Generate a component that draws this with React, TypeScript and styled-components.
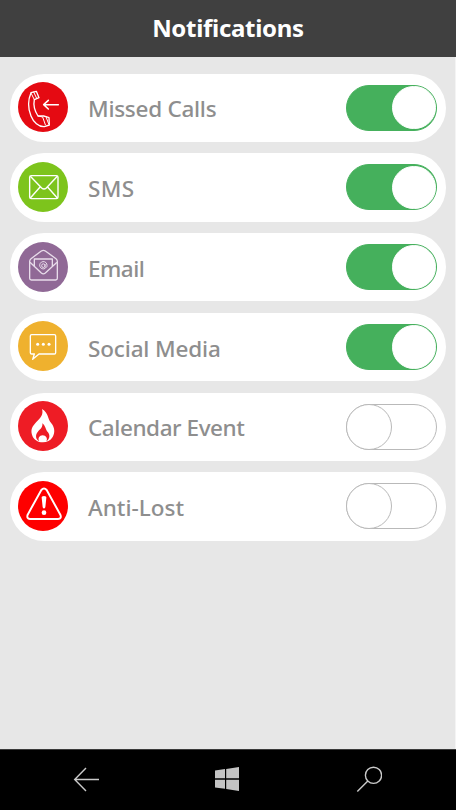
import React, { useState } from "react";
import styled, { createGlobalStyle } from "styled-components";

interface IToggleProps {
  $on: boolean;
}

interface IBadgeProps {
  $color: string;
}

interface ILabelProps {
  $spacing: number;
}

interface ISetting {
  name: string;
  color: string;
  spacing: number;
  enabled: boolean;
  icon: React.ReactNode;
}

const GlobalStyle = createGlobalStyle`
  * {
    box-sizing: border-box;
  }

  body {
    margin: 0;
    font-family: "Noto Sans", "Open Sans", sans-serif;
  }
`;

const Screen = styled.div`
  display: flex;
  flex-direction: column;
  width: 456px;
  height: 810px;
  overflow: hidden;
  background-color: #e7e7e7;
`;

const Header = styled.header`
  display: flex;
  flex: none;
  align-items: center;
  justify-content: center;
  height: 57px;
  background-color: #404040;
`;

const Title = styled.h1`
  margin: 0;
  padding-bottom: 3px;
  color: #fff;
  font-size: 24px;
  line-height: 33px;
  font-weight: 700;
  letter-spacing: -0.3px;
`;

const Settings = styled.main`
  display: flex;
  flex: 1;
  flex-direction: column;
  gap: 11.5px;
  padding: 16.5px 9px 0 10px;
  border-right: 1px solid #f4f4f4;
`;

const Row = styled.section`
  display: flex;
  flex: none;
  align-items: center;
  height: 68.25px;
  padding: 0 9px 0 8px;
  border-radius: 34.2px;
  background-color: #fff;
`;

const Badge = styled.div<IBadgeProps>`
  flex: none;
  width: 50px;
  height: 50px;
  margin-bottom: 1px;
  border-radius: 50%;
  background-color: ${({ $color }) => $color};

  svg {
    display: block;
    width: 100%;
    height: 100%;
  }
`;

const Label = styled.span<ILabelProps>`
  flex: 1;
  margin-left: 20px;
  padding-top: 3.5px;
  color: #8e8e8e;
  font-size: 22.5px;
  line-height: 30px;
  font-weight: 500;
  letter-spacing: ${({ $spacing }) => $spacing}px;
  white-space: nowrap;
`;

const Toggle = styled.button<IToggleProps>`
  display: flex;
  flex: none;
  align-items: center;
  justify-content: ${({ $on }) => ($on ? "flex-end" : "flex-start")};
  width: 91px;
  height: 46px;
  margin: 0;
  padding: 0;
  border: 1px solid ${({ $on }) => ($on ? "#45b05c" : "#b9b9b9")};
  border-radius: 23px;
  background-color: ${({ $on }) => ($on ? "#45b05c" : "#fff")};
`;

const Knob = styled.span<IToggleProps>`
  flex: none;
  width: ${({ $on }) => ($on ? 43.5 : 46)}px;
  height: ${({ $on }) => ($on ? 43.5 : 46)}px;
  margin: ${({ $on }) => ($on ? "0.25px" : "-1px")};
  border: 1px solid ${({ $on }) => ($on ? "#fff" : "#b9b9b9")};
  border-radius: 50%;
  background-color: #fff;
`;

const NavBar = styled.nav`
  display: flex;
  flex: none;
  align-items: center;
  justify-content: space-between;
  height: 61px;
  padding: 0 74px 2px 72px;
  border-top: 1px solid #3a3a3a;
  background-color: #000;

  svg {
    display: block;
  }
`;

const PhoneIcon = () => (
  <svg viewBox="24 24 150 150" fill="none" stroke="#fff" strokeWidth="4" strokeLinejoin="round" strokeLinecap="round">
    <path d="M63 56 L79 52 L87 71 L73 77 C70 92 74 111 84 126 L101 126 L108 128 L117 131 L118 153 L103 158 C86 159 70 144 63 126 C54 104 54 77 63 56Z" />
    <path d="M71 54 L80 73 M63 57 L73 77 M84 126 L98 129 L106 152 M108 128 L116 150" strokeWidth="3" />
    <path d="M145 92 H102 M115 79 L101 92 L115 105" strokeWidth="4.6" />
  </svg>
);

const EnvelopeIcon = () => (
  <svg viewBox="24 24 150 150" fill="none" stroke="#fff" strokeWidth="4.2" strokeLinejoin="round">
    <rect x="59" y="65" width="85" height="69" rx="5" />
    <path d="M61 67 L95 102 Q102 108 109 102 L142 67 M61 132 L91 98 M142 132 L112 98" />
  </svg>
);

const OpenEnvelopeIcon = () => (
  <svg viewBox="24 24 150 150" fill="none" stroke="#e8dcea" strokeWidth="4" strokeLinejoin="round">
    <path d="M59 82 Q59 77 63 74 L94 51 Q100 47 106 51 L138 74 Q142 77 142 82 V133 Q142 138 137 138 H64 Q59 138 59 133Z" />
    <path d="M60 85 L94 117 Q100 122 106 117 L141 85 M73 96 V75 H127 V96" />
    <path d="M106 103 A11 11 0 1 1 111 95 C111 102 105 102 105 98 V90 M105 95 A5 5.5 0 1 1 95 95 A5 5.5 0 1 1 105 95" strokeWidth="3" />
  </svg>
);

const ChatIcon = () => (
  <svg viewBox="24 24 150 150" fill="none" stroke="#fff" strokeWidth="4" strokeLinejoin="round">
    <path d="M65 65 H133 Q137 65 137 69 V119 Q137 123 133 123 H87 L68 139 L73 123 H65 Q61 123 61 119 V69 Q61 65 65 65Z" />
    <g fill="#fff" stroke="none">
      <circle cx="83" cy="94" r="4.5" />
      <circle cx="100" cy="94" r="4.5" />
      <circle cx="117" cy="94" r="4.5" />
    </g>
  </svg>
);

const FlameIcon = () => (
  <svg viewBox="24 24 150 150">
    <path
      d="M96 48 C116 59 112 77 124 91 C134 103 136 119 128 132 C121 143 111 148 99 148 C83 148 70 139 66 125 C61 109 68 99 79 87 C92 74 101 65 96 48Z"
      fill="#fff"
    />
    <path
      d="M97 91 C107 98 106 110 114 118 C121 127 119 139 109 145 C114 137 108 127 98 127 C88 127 82 137 88 145 C77 140 75 126 83 117 C91 108 99 103 97 91Z"
      fill="#ee1c25"
    />
  </svg>
);

const WarningIcon = () => (
  <svg viewBox="24 24 150 150" fill="none" stroke="#fff" strokeWidth="5.8" strokeLinejoin="round">
    <path d="M94 51 Q102 42 110 51 L151 125 Q156 137 144 138 H60 Q49 137 53 125Z" />
    <path d="M95 74 Q94 69 102 69 Q110 69 109 74 L106 103 Q102 110 98 103Z" fill="#fff" stroke="none" />
    <circle cx="102" cy="119" r="7" fill="#fff" stroke="none" />
  </svg>
);

const BackIcon = () => (
  <svg width="28" height="26" viewBox="0 0 28 26" fill="none" stroke="#cacaca" strokeWidth="1.4">
    <path d="M27 13.5 H3 M14 2 L2.7 13.5 L14 25" />
  </svg>
);

const WindowsIcon = () => (
  <svg width="24" height="24" viewBox="0 0 24 24" fill="#c4c4c4">
    <path d="M0 3.6 L10 2.1 V11.3 H0Z M11.2 1.9 L24 0 V11.3 H11.2Z M0 12.7 H10 V21.8 L0 20.4Z M11.2 12.7 H24 V24 L11.2 22Z" />
  </svg>
);

const SearchIcon = () => (
  <svg width="28" height="26" viewBox="-3 0 28 26" fill="none" stroke="#cacaca" strokeWidth="1.4">
    <circle cx="16.5" cy="9.3" r="8.1" />
    <path d="M10.8 15 L0.3 25.5" />
  </svg>
);

const settings: ISetting[] = [
  { name: "Missed Calls", color: "#e50a12", spacing: -0.27, enabled: true, icon: <PhoneIcon /> },
  { name: "SMS", color: "#7dc41c", spacing: 0.4, enabled: true, icon: <EnvelopeIcon /> },
  { name: "Email", color: "#906996", spacing: -0.5, enabled: true, icon: <OpenEnvelopeIcon /> },
  { name: "Social Media", color: "#efb12e", spacing: -0.15, enabled: true, icon: <ChatIcon /> },
  { name: "Calendar Event", color: "#ee1c25", spacing: -0.43, enabled: false, icon: <FlameIcon /> },
  { name: "Anti-Lost", color: "#fe0000", spacing: 0, enabled: false, icon: <WarningIcon /> },
];

const SettingRow = ({ name, color, spacing, enabled, icon }: ISetting) => {
  const [on, setOn] = useState(enabled);

  return (
    <Row>
      <Badge $color={color}>{icon}</Badge>
      <Label $spacing={spacing}>{name}</Label>
      <Toggle $on={on} role="switch" aria-checked={on} onClick={() => setOn(!on)}>
        <Knob $on={on} />
      </Toggle>
    </Row>
  );
};

const App = () => (
  <Screen>
    <GlobalStyle />
    <Header>
      <Title>Notifications</Title>
    </Header>
    <Settings>
      {settings.map((setting) => (
        <SettingRow key={setting.name} {...setting} />
      ))}
    </Settings>
    <NavBar>
      <BackIcon />
      <WindowsIcon />
      <SearchIcon />
    </NavBar>
  </Screen>
);

export default App;
